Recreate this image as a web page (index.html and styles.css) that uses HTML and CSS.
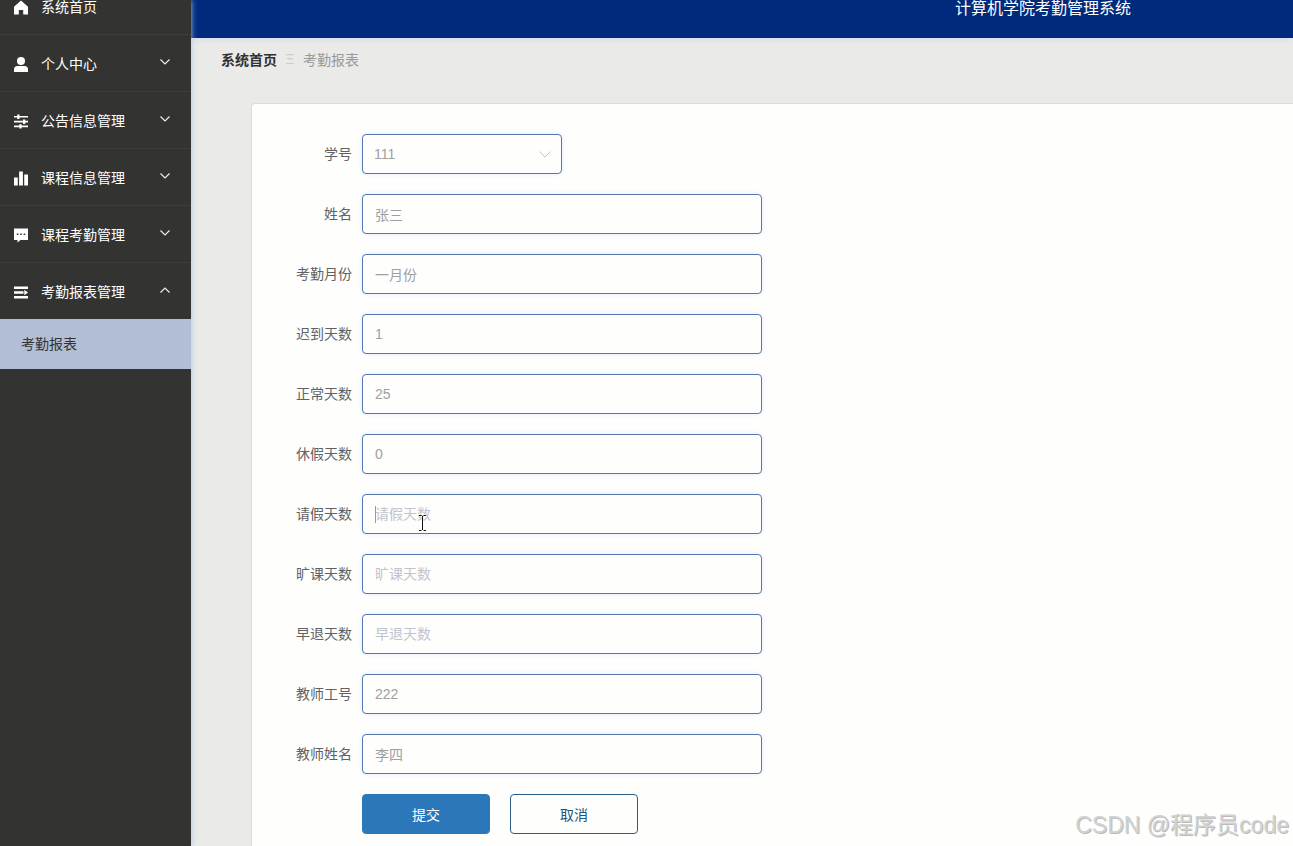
FILE: index.html
```
<!DOCTYPE html>
<html lang="zh-CN">

<head>
    <meta charset="UTF-8">
    <meta name="viewport" content="width=device-width, initial-scale=1.0">
    <title>计算机学院考勤管理系统</title>
    <link rel="stylesheet" href="styles.css">
</head>

<body>
    <div class="app">
        <!-- 侧边菜单 -->
        <nav class="sidebar">
            <ul class="menu">
                <li>
                    <a href="#home" class="menu-item">
                        <svg class="icon" viewBox="0 0 14 14"><path d="M7 0 14 6.200V14H9.200V9.600H4.800V14H0V6.200z" /></svg>
                        <span>系统首页</span>
                    </a>
                </li>
                <li>
                    <a href="#center" class="menu-item">
                        <svg class="icon" viewBox="0 0 14 15"><circle cx="7" cy="4" r="4" /><path d="M0 15v-2.500Q0 9 3.500 9h7Q14 9 14 12.500V15z" /></svg>
                        <span>个人中心</span>
                        <svg class="arrow" viewBox="0 0 10 6"><path d="M.5.5 5 5 9.500.5" /></svg>
                    </a>
                </li>
                <li>
                    <a href="#notice" class="menu-item">
                        <svg class="icon" viewBox="0 0 14 14"><path d="M0 1.500h14v1.600H0zM0 6.300h14v1.600H0zM0 11.100h14v1.600H0zM3.200 0h2.300v4.500H3.200zM9 4.900h2.300v4.500H9zM5.300 9.700h2.300V14H5.300z" /></svg>
                        <span>公告信息管理</span>
                        <svg class="arrow" viewBox="0 0 10 6"><path d="M.5.5 5 5 9.500.5" /></svg>
                    </a>
                </li>
                <li>
                    <a href="#course" class="menu-item">
                        <svg class="icon" viewBox="0 0 14 14"><path d="M0 6h3.800v8H0zM5.100 0h3.800v14H5.100zM10.200 3H14v11h-3.800z" /></svg>
                        <span>课程信息管理</span>
                        <svg class="arrow" viewBox="0 0 10 6"><path d="M.5.5 5 5 9.500.5" /></svg>
                    </a>
                </li>
                <li>
                    <a href="#attendance" class="menu-item">
                        <svg class="icon" viewBox="0 0 14 14"><path fill-rule="evenodd" d="M0 0h14v11.500H6.500L3.500 14v-2.500H0zM2.800 5v1.600h1.600V5zM6.200 5v1.600h1.600V5zM9.600 5v1.600h1.600V5z" /></svg>
                        <span>课程考勤管理</span>
                        <svg class="arrow" viewBox="0 0 10 6"><path d="M.5.5 5 5 9.500.5" /></svg>
                    </a>
                </li>
                <li>
                    <a href="#report" class="menu-item">
                        <svg class="icon" viewBox="0 0 14 14"><path d="M0 1h14v2.500H0zM0 5.800h9.500v2.400H0zM0 10.500h14V13H0zM10.300 4.300 14 7l-3.700 2.700z" /></svg>
                        <span>考勤报表管理</span>
                        <svg class="arrow" viewBox="0 0 10 6"><path d="M.5 5.500 5 1l4.500 4.500" /></svg>
                    </a>
                    <a href="#report-list" class="sub-item">考勤报表</a>
                </li>
            </ul>
        </nav>

        <div class="main">
            <header class="header">计算机学院考勤管理系统</header>
            <!-- 面包屑 -->
            <div class="breadcrumb">
                <a href="#home">系统首页</a>
                <span class="separator">Ξ</span>
                <span>考勤报表</span>
            </div>

            <form class="card">
                <div class="row">
                    <label for="xuehao">学号</label>
                    <div class="field select">
                        <select id="xuehao">
                            <option>111</option>
                        </select>
                        <svg class="select-arrow" viewBox="0 0 12 7"><path d="M.5.5 6 6 11.500.5" /></svg>
                    </div>
                </div>
                <div class="row">
                    <label for="xingming">姓名</label>
                    <div class="field"><input type="text" id="xingming" value="张三"></div>
                </div>
                <div class="row">
                    <label for="yuefen">考勤月份</label>
                    <div class="field"><input type="text" id="yuefen" value="一月份"></div>
                </div>
                <div class="row">
                    <label for="chidao">迟到天数</label>
                    <div class="field"><input type="text" id="chidao" value="1"></div>
                </div>
                <div class="row">
                    <label for="zhengchang">正常天数</label>
                    <div class="field"><input type="text" id="zhengchang" value="25"></div>
                </div>
                <div class="row">
                    <label for="xiujia">休假天数</label>
                    <div class="field"><input type="text" id="xiujia" value="0"></div>
                </div>
                <div class="row">
                    <label for="qingjia">请假天数</label>
                    <div class="field">
                        <input type="text" id="qingjia" placeholder="请假天数">
                        <span class="caret"></span>
                        <svg class="cursor" viewBox="0 0 8 16"><path d="M1 .5h2.500M5.500.5H8M4.500 1v14M1 15.500h2.500M5.500 15.500H8" /></svg>
                    </div>
                </div>
                <div class="row">
                    <label for="kuangke">旷课天数</label>
                    <div class="field"><input type="text" id="kuangke" placeholder="旷课天数"></div>
                </div>
                <div class="row">
                    <label for="zaotui">早退天数</label>
                    <div class="field"><input type="text" id="zaotui" placeholder="早退天数"></div>
                </div>
                <div class="row">
                    <label for="gonghao">教师工号</label>
                    <div class="field"><input type="text" id="gonghao" value="222"></div>
                </div>
                <div class="row">
                    <label for="jiaoshi">教师姓名</label>
                    <div class="field"><input type="text" id="jiaoshi" value="李四"></div>
                </div>
                <div class="buttons">
                    <button type="button" class="btn btn-submit">提交</button>
                    <button type="button" class="btn">取消</button>
                </div>
            </form>
        </div>
    </div>
    <div class="watermark">CSDN @程序员code</div>
</body>

</html>
```

FILE: styles.css
```
* {
    box-sizing: border-box;
}

body {
    margin: 0;
    font-family: "Liberation Sans", "Noto Sans CJK SC", sans-serif;
    font-size: 14px;
    background-color: #eaeae9;
}

a {
    text-decoration: none;
}

.app {
    display: flex;
    height: 100vh;
    overflow: hidden;
}

/* 侧边菜单 */

.sidebar {
    flex: none;
    width: 191px;
    background-color: #333331;
    box-shadow: 0 0 6px 0 #a9c6e8;
    z-index: 1;
}

.menu {
    /* 页面向下滚动了一点 */
    margin: -22px 0 0;
    padding: 0;
    list-style: none;
}

.menu-item {
    display: flex;
    align-items: center;
    height: 57px;
    padding: 0 20px 0 14px;
    border-bottom: 1px solid #3d3d3b;
    color: #fff;
}

.menu li:last-child .menu-item {
    height: 56px;
    border-bottom: none;
}

.icon {
    width: 14px;
    height: 15px;
    margin: 2px 13px 0 0;
    fill: #fff;
}

.arrow {
    width: 10px;
    height: 6px;
    margin: 0 1px 2px auto;
    fill: none;
    stroke: #eee;
    stroke-width: 1.2;
}

.sub-item {
    display: block;
    height: 50px;
    padding-left: 21px;
    line-height: 50px;
    background-color: #b1bed6;
    color: #333;
}

/* 右侧内容 */

.main {
    display: flex;
    flex: 1;
    flex-direction: column;
    min-width: 0;
}

.header {
    flex: none;
    height: 60px;
    margin-top: -22px;
    padding-left: 764px;
    line-height: 62px;
    font-size: 16px;
    white-space: nowrap;
    color: #fff;
    background-color: #002b7d;
    box-shadow: 0 1px 6px 0 #d4d8ee;
}

.breadcrumb {
    display: flex;
    flex: none;
    align-items: center;
    height: 42px;
    padding-left: 30px;
    color: #999;
}

.breadcrumb a {
    font-weight: bold;
    color: #303133;
}

.separator {
    width: 26px;
    text-align: center;
    color: #ccc;
}

.card {
    flex: 1 0 auto;
    margin: 23px 0 0 60px;
    padding: 30px 0;
    border: 1px solid #dcdcdc;
    border-right: none;
    border-radius: 4px 0 0 0;
    background-color: #fefefd;
}

.row {
    display: flex;
    margin-bottom: 20px;
}

.row label {
    width: 110px;
    padding-right: 10px;
    line-height: 40px;
    text-align: right;
    color: #606266;
}

.field {
    position: relative;
    width: 400px;
}

.field.select {
    width: 200px;
}

.field input,
.field select {
    display: block;
    width: 100%;
    height: 40px;
    padding: 0 12px;
    border: 1px solid #5379ae;
    border-radius: 4px;
    outline: none;
    box-shadow: 0 0 5px 0 #e3ebfa;
    background-color: #fefefd;
    font: inherit;
    color: #a0a0a0;
}

.field select {
    padding: 0 11px;
    appearance: none;
}

.field input::placeholder {
    color: #c0c4cc;
}

.select-arrow {
    position: absolute;
    top: 17px;
    right: 11px;
    width: 12px;
    height: 7px;
    fill: none;
    stroke: #c0c4cc;
    pointer-events: none;
}

.caret {
    position: absolute;
    top: 12px;
    left: 13px;
    width: 1px;
    height: 17px;
    background-color: #999;
}

.cursor {
    position: absolute;
    top: 21px;
    left: 56px;
    width: 8px;
    height: 16px;
    fill: none;
    stroke: #111;
}

.buttons {
    display: flex;
    gap: 20px;
    padding-left: 110px;
}

.btn {
    width: 128px;
    height: 40px;
    border: 1px solid #2a5c85;
    border-radius: 4px;
    background-color: #fefefd;
    font: inherit;
    color: #205375;
    cursor: pointer;
}

.btn-submit {
    border-color: #2c77b9;
    background-color: #2c77b9;
    color: #fff;
}

/* 水印 */

.watermark {
    position: absolute;
    right: 4px;
    bottom: 3px;
    font-size: 23px;
    line-height: 36px;
    color: #d2d2d2;
    text-shadow: 1px 1px 0 #bbb;
    z-index: 2;
}
```
